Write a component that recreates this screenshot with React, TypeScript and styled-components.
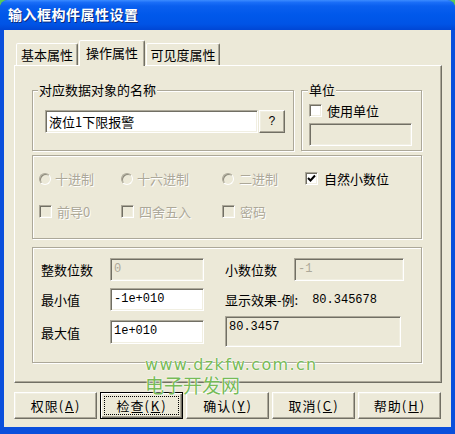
import React from 'react';
import styled, { createGlobalStyle, css } from 'styled-components';

const FONT = `"Noto Sans CJK SC", "Noto Sans", sans-serif`;
const MONO = `"Liberation Mono", "DejaVu Sans Mono", monospace`;

const Global = createGlobalStyle`
  html, body { margin: 0; padding: 0; background: #58c858; }
  body { width: 455px; height: 434px; overflow: hidden; font-family: ${FONT}; }
  * { box-sizing: border-box; }
`;

const sunken = css`
  border: 1px solid;
  border-color: #aca899 #fff #fff #aca899;
  box-shadow: inset 1px 1px 0 #716f64, inset -1px -1px 0 #f1efe2;
`;

const raised = css`
  border: 1px solid;
  border-color: #fff #716f64 #716f64 #fff;
  box-shadow: inset -1px -1px 0 #aca899, inset 1px 1px 0 #f1efe2;
`;

const Window = styled.div`
  position: relative;
  width: 455px;
  height: 434px;
  display: flex;
  flex-direction: column;
  background: #0a4fdc;
  border-radius: 8px 8px 0 0;
  overflow: hidden;
`;

const TitleBar = styled.div`
  flex: none;
  height: 30px;
  display: flex;
  align-items: center;
  padding: 0 0 2px 8px;
  background: linear-gradient(
    to bottom,
    #3c8cff 0%,
    #1a6ef8 8%,
    #0a5fef 20%,
    #0058ea 50%,
    #0054e6 80%,
    #0046d4 100%
  );
  color: #fff;
  font: bold 14px ${FONT};
  letter-spacing: 0.5px;
  text-shadow: 1px 1px 0 #0b2a7a;
`;

const Client = styled.div`
  flex: 1;
  margin: 0 4px 7px 4px;
  background: #ece9d8;
  padding: 10px 9px 8px 10px;
  display: flex;
  flex-direction: column;
`;

const TabStrip = styled.div`
  height: 25px;
  display: flex;
  align-items: flex-end;
  padding-left: 2px;
  position: relative;
  z-index: 1;
`;

const Tab = styled.div<{ $w: number; $active?: boolean }>`
  width: ${(p) => p.$w}px;
  height: ${(p) => (p.$active ? 26 : 22)}px;
  margin-bottom: ${(p) => (p.$active ? -1 : 0)}px;
  margin-left: 1px;
  display: flex;
  align-items: center;
  justify-content: center;
  background: #ece9d8;
  font: 13px ${FONT};
  color: #000;
  border: 1px solid;
  border-bottom: none;
  border-color: #fff #716f64 transparent #fff;
  box-shadow: inset -1px 0 0 #aca899;
  border-radius: 2px 2px 0 0;
  padding-bottom: ${(p) => (p.$active ? 3 : 0)}px;
  &:first-child { margin-left: 0; }
`;

const Panel = styled.div`
  height: 318px;
  ${raised};
  box-shadow: inset -1px -1px 0 #aca899;
  padding: 24px 19px 0 17px;
  display: flex;
  flex-direction: column;
`;

const Row = styled.div<{ $gap?: number }>`
  display: flex;
  gap: ${(p) => p.$gap ?? 0}px;
`;

const Group = styled.div<{ $w?: number; $h: number; $mt?: number }>`
  position: relative;
  ${(p) => (p.$w ? `width: ${p.$w}px;` : 'width: 100%;')}
  height: ${(p) => p.$h}px;
  margin-top: ${(p) => p.$mt ?? 0}px;
  border: 1px solid #aca899;
  box-shadow: 1px 1px 0 #fff, inset 1px 1px 0 #fff;
`;

const Legend = styled.span<{ $left: number }>`
  position: absolute;
  top: -10px;
  left: ${(p) => p.$left}px;
  padding: 0 1px;
  background: #ece9d8;
  font: 13px/18px ${FONT};
  color: #000;
`;

const GroupBody = styled.div<{ $pt: number; $pl: number }>`
  padding: ${(p) => p.$pt}px 0 0 ${(p) => p.$pl}px;
  display: flex;
  flex-direction: column;
`;

const TextBox = styled.div<{ $w: number; $h?: number; $disabled?: boolean; $mono?: boolean; $dark?: boolean }>`
  ${sunken};
  width: ${(p) => p.$w}px;
  height: ${(p) => p.$h ?? 23}px;
  flex: none;
  background: ${(p) => (p.$disabled ? '#ece9d8' : '#fff')};
  color: ${(p) => (p.$disabled && !p.$dark ? '#aca899' : '#000')};
  font: ${(p) => (p.$mono ? `12px/19px ${MONO}` : `13px/19px ${FONT}`)};
  padding: 1px 0 0 3px;
  white-space: nowrap;
  overflow: hidden;
`;

const SmallButton = styled.div`
  ${raised};
  width: 26px;
  height: 23px;
  display: flex;
  align-items: center;
  justify-content: center;
  background: #ece9d8;
  font: 12px ${MONO};
  color: #000;
`;

const CheckBox = styled.div<{ $disabled?: boolean }>`
  ${sunken};
  width: 13px;
  height: 13px;
  flex: none;
  background: ${(p) => (p.$disabled ? '#ece9d8' : '#fff')};
  display: flex;
  align-items: center;
  justify-content: center;
`;

const Radio = styled.div`
  width: 12px;
  height: 12px;
  flex: none;
  border-radius: 50%;
  border: 1px solid;
  border-color: #aca899 #fff #fff #aca899;
  box-shadow: inset 1px 1px 0 #8d8a7c;
  background: #ece9d8;
`;

const Option = styled.div<{ $gap?: number }>`
  display: flex;
  align-items: center;
  gap: ${(p) => p.$gap ?? 5}px;
  height: 17px;
`;

const Label = styled.span<{ $disabled?: boolean; $w?: number }>`
  font: 13px/17px ${FONT};
  color: ${(p) => (p.$disabled ? '#aca899' : '#000')};
  text-shadow: ${(p) => (p.$disabled ? '1px 1px 0 #fff' : 'none')};
  white-space: nowrap;
  ${(p) => (p.$w ? `width: ${p.$w}px; flex: none;` : '')}
`;

const OptionGrid = styled.div`
  display: grid;
  grid-template-columns: 82px 101px 83px auto;
  row-gap: 16px;
`;

const FieldRow = styled.div<{ $mt?: number; $h?: number }>`
  display: flex;
  align-items: center;
  height: ${(p) => p.$h ?? 23}px;
  margin-top: ${(p) => p.$mt ?? 0}px;
`;

const Columns = styled.div`
  display: flex;
  gap: 21px;
`;

const Column = styled.div`
  display: flex;
  flex-direction: column;
`;

const Mono = styled.span`
  font: 12px ${MONO};
  color: #000;
  margin-left: 14px;
`;

const ButtonBar = styled.div`
  margin-top: 9px;
  display: flex;
  gap: 3px;
`;

const Button = styled.div<{ $focused?: boolean }>`
  position: relative;
  width: 83px;
  height: 27px;
  display: flex;
  align-items: center;
  justify-content: center;
  background: #ece9d8;
  font: 13px ${FONT};
  letter-spacing: 1px;
  color: #000;
  ${(p) =>
    p.$focused
      ? css`
          border: 1px solid #000;
          box-shadow: inset 1px 1px 0 #fff, inset -1px -1px 0 #716f64, inset -2px -2px 0 #aca899;
          &::after {
            content: '';
            position: absolute;
            inset: 3px;
            border: 1px dotted #000;
          }
        `
      : raised}
`;

const U = styled.span`
  text-decoration: underline;
  text-underline-offset: 1px;
  padding: 0 1px;
`;

const Watermark = styled.div`
  position: absolute;
  left: 145px;
  top: 355px;
  display: flex;
  flex-direction: column;
  color: rgba(100, 178, 64, 0.9);
  text-shadow: 0 0 2px #fff, 0 0 1px #fff;
  pointer-events: none;
  z-index: 5;
`;

const WmUrl = styled.span`
  font: 16px/20px "DejaVu Sans", Verdana, sans-serif;
  letter-spacing: 1.35px;
`;

const WmCn = styled.span`
  font: 19px/22px ${FONT};
  margin-top: -1px;
`;

const Check = () => (
  <svg width="9" height="9" viewBox="0 0 9 9">
    <path d="M1 4 L3.5 6.5 L8 1.5" stroke="#000" strokeWidth="2" fill="none" />
  </svg>
);

export default function App() {
  return (
    <>
      <Global />
      <Window>
        <TitleBar>输入框构件属性设置</TitleBar>
        <Client>
          <TabStrip>
            <Tab $w={62}>基本属性</Tab>
            <Tab $w={66} $active>
              操作属性
            </Tab>
            <Tab $w={74}>可见度属性</Tab>
          </TabStrip>
          <Panel>
            <Row $gap={7}>
              <Group $w={262} $h={61}>
                <Legend $left={5}>对应数据对象的名称</Legend>
                <GroupBody $pt={19} $pl={12}>
                  <Row $gap={1}>
                    <TextBox $w={213}>液位1下限报警</TextBox>
                    <SmallButton>?</SmallButton>
                  </Row>
                </GroupBody>
              </Group>
              <Group $w={121} $h={61}>
                <Legend $left={6}>单位</Legend>
                <GroupBody $pt={11} $pl={7}>
                  <Option>
                    <CheckBox />
                    <Label>使用单位</Label>
                  </Option>
                  <FieldRow $mt={4} $h={23}>
                    <TextBox $w={103} $disabled />
                  </FieldRow>
                </GroupBody>
              </Group>
            </Row>

            <Group $h={84} $mt={4}>
              <GroupBody $pt={14} $pl={6}>
                <OptionGrid>
                  <Option $gap={4}>
                    <Radio />
                    <Label $disabled>十进制</Label>
                  </Option>
                  <Option $gap={4}>
                    <Radio />
                    <Label $disabled>十六进制</Label>
                  </Option>
                  <Option $gap={5}>
                    <Radio />
                    <Label $disabled>二进制</Label>
                  </Option>
                  <Option $gap={6}>
                    <CheckBox>
                      <Check />
                    </CheckBox>
                    <Label>自然小数位</Label>
                  </Option>
                  <Option>
                    <CheckBox $disabled />
                    <Label $disabled>前导0</Label>
                  </Option>
                  <Option>
                    <CheckBox $disabled />
                    <Label $disabled>四舍五入</Label>
                  </Option>
                  <Option>
                    <CheckBox $disabled />
                    <Label $disabled>密码</Label>
                  </Option>
                </OptionGrid>
              </GroupBody>
            </Group>

            <Group $h={116} $mt={8}>
              <GroupBody $pt={10} $pl={8}>
                <Columns>
                  <Column>
                    <FieldRow>
                      <Label $w={69}>整数位数</Label>
                      <TextBox $w={94} $disabled $mono>
                        0
                      </TextBox>
                    </FieldRow>
                    <FieldRow $mt={7}>
                      <Label $w={69}>最小值</Label>
                      <TextBox $w={94} $mono>
                        -1e+010
                      </TextBox>
                    </FieldRow>
                    <FieldRow $mt={9} $h={24}>
                      <Label $w={69}>最大值</Label>
                      <TextBox $w={94} $h={24} $mono>
                        1e+010
                      </TextBox>
                    </FieldRow>
                  </Column>
                  <Column>
                    <FieldRow>
                      <Label $w={69}>小数位数</Label>
                      <TextBox $w={110} $disabled $mono>
                        -1
                      </TextBox>
                    </FieldRow>
                    <FieldRow $mt={7}>
                      <Label>显示效果-例:</Label>
                      <Mono>80.345678</Mono>
                    </FieldRow>
                    <FieldRow $mt={5} $h={31}>
                      <TextBox $w={176} $h={31} $disabled $dark $mono>
                        80.3457
                      </TextBox>
                    </FieldRow>
                  </Column>
                </Columns>
              </GroupBody>
            </Group>
          </Panel>
          <ButtonBar>
            <Button>
              权限(<U>A</U>)
            </Button>
            <Button $focused>
              检查(<U>K</U>)
            </Button>
            <Button>
              确认(<U>Y</U>)
            </Button>
            <Button>
              取消(<U>C</U>)
            </Button>
            <Button>
              帮助(<U>H</U>)
            </Button>
          </ButtonBar>
        </Client>
        <Watermark>
          <WmUrl>www.dzkfw.com.cn</WmUrl>
          <WmCn>电子开发网</WmCn>
        </Watermark>
      </Window>
    </>
  );
}
